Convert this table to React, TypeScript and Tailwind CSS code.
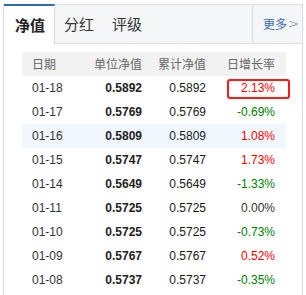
import React from "react";

type Row = { d: string; a: string; b: string; r: string; c: "up" | "down" | "flat"; hl?: boolean; box?: boolean };

const rows: Row[] = [
  { d: "01-18", a: "0.5892", b: "0.5892", r: "2.13%", c: "up", box: true },
  { d: "01-17", a: "0.5769", b: "0.5769", r: "-0.69%", c: "down" },
  { d: "01-16", a: "0.5809", b: "0.5809", r: "1.08%", c: "up", hl: true },
  { d: "01-15", a: "0.5747", b: "0.5747", r: "1.73%", c: "up" },
  { d: "01-14", a: "0.5649", b: "0.5649", r: "-1.33%", c: "down" },
  { d: "01-11", a: "0.5725", b: "0.5725", r: "0.00%", c: "flat" },
  { d: "01-10", a: "0.5725", b: "0.5725", r: "-0.73%", c: "down" },
  { d: "01-09", a: "0.5767", b: "0.5767", r: "0.52%", c: "up" },
  { d: "01-08", a: "0.5737", b: "0.5737", r: "-0.35%", c: "down" },
];

export default function App() {
  return (
    <div className="w-[306px] h-[295px] bg-white overflow-hidden pt-[4px] pl-[3px]">
      <div
        className="w-[300px] h-[291px] border-l border-r border-[#dcdcdc]"
        style={{ fontFamily: '"Liberation Sans", Arial, "Noto Sans CJK SC", sans-serif' }}
      >
        {/* tab bar */}
        <div className="flex h-[40px] bg-[#f5f6f8]" style={{ fontFamily: '"Noto Sans CJK SC", "Liberation Sans", sans-serif' }}>
          <div className="w-[51px] bg-white border-t-2 border-[#2f6bb5] border-r border-r-[#dcdcdc] flex items-center pl-[11px] text-[15px] font-bold text-[#222]">
            净值
          </div>
          <div className="flex flex-1 border-t border-b border-[#dcdcdc]">
            <div className="px-[9px] flex items-center text-[15px] text-[#333]">分红</div>
            <div className="px-[9px] flex items-center text-[15px] text-[#333]">评级</div>
            <div className="flex-1" />
            <div className="w-[50px] border-l border-[#dcdcdc] flex items-center pl-[10px] text-[12px] text-[#3a69b8]">
              更多<span className="ml-[1px] text-[13px]" style={{ fontFamily: '"DejaVu Sans", sans-serif', fontWeight: 200 }}>&gt;</span>
            </div>
          </div>
        </div>

        {/* table */}
        <div className="ml-[18px] mt-[8px] w-[264px] text-[12px]">
          <div
            className="flex h-[24px] items-center bg-[#f2f2f2] text-[#666]"
            style={{ fontFamily: '"Noto Sans CJK SC", "Liberation Sans", sans-serif' }}
          >
            <div className="w-[68px] pl-[10px]">日期</div>
            <div className="w-[52px] text-right">单位净值</div>
            <div className="w-[64px] text-right">累计净值</div>
            <div className="w-[69px] text-right">日增长率</div>
          </div>
          {rows.map((r) => (
            <div key={r.d} className={`flex h-[24px] items-center ${r.hl ? "bg-[#f0f7fe]" : ""}`}>
              <div className="w-[68px] pl-[10px] text-[#333]">{r.d}</div>
              <div className="w-[52px] text-right font-bold text-[#222]">{r.a}</div>
              <div className="w-[64px] text-right text-[#1a1a1a]">{r.b}</div>
              <div
                className={`relative w-[69px] h-[18px] leading-[18px] text-right ${
                  r.c === "up" ? "text-[#ff0000]" : r.c === "down" ? "text-[#008000]" : "text-[#333]"
                }`}
              >
                {r.r}
                {r.box && (
                  <div className="absolute left-[21px] top-[0px] w-[63px] h-[20px] border-2 border-[#ff1a1a] rounded-[3px]" />
                )}
              </div>
            </div>
          ))}
        </div>
      </div>
    </div>
  );
}
